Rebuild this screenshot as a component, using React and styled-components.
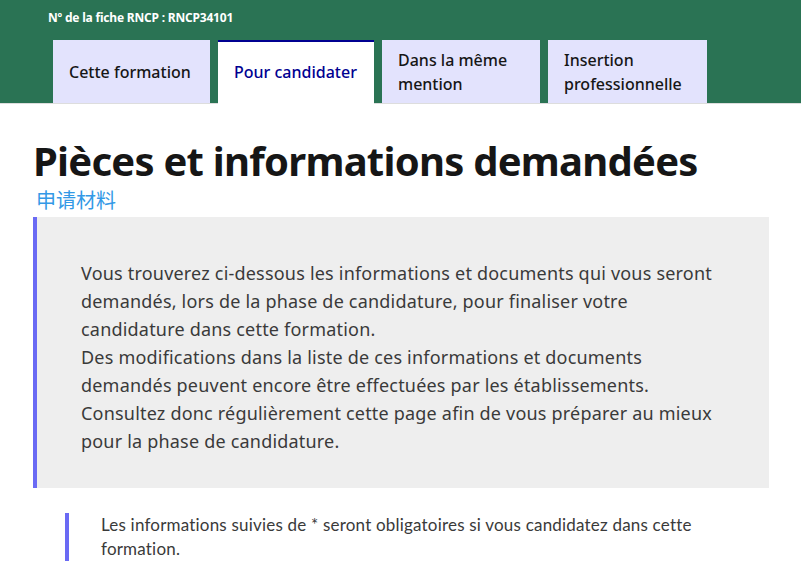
import React from "react";
import styled, { createGlobalStyle } from "styled-components";

const Global = createGlobalStyle`
  html, body { margin: 0; padding: 0; background: #fff; }
  body { font-family: "Noto Sans", "Noto Sans CJK SC", sans-serif; color: #161616; }
`;

const Header = styled.header`
  background: #2a7354;
  padding: 8px 0 0 48px;
  box-shadow: inset 0 -1px 0 #dddddd;
`;

const FicheLabel = styled.div`
  color: #fff;
  font-size: 12px;
  font-weight: 700;
  line-height: 20px;
  letter-spacing: -0.2px;
`;

const TabList = styled.nav`
  display: flex;
  gap: 8px;
  margin-top: 12px;
  padding-left: 5px;
`;

const Tab = styled.div`
  flex: none;
  box-sizing: border-box;
  width: ${(p) => p.$w}px;
  height: 64px;
  padding: 6px 16px 8px 16px;
  display: flex;
  align-items: center;
  font-size: 16px;
  font-weight: 500;
  line-height: 24px;
  background: ${(p) => (p.$active ? "#ffffff" : "#e3e3fd")};
  color: ${(p) => (p.$active ? "#000091" : "#161616")};
  border-top: 2px solid ${(p) => (p.$active ? "#000091" : "transparent")};
  box-shadow: ${(p) => (p.$active ? "none" : "inset 0 -1px 0 #dddddd")};
`;

const Main = styled.main`
  padding: 0 32px 40px 33px;
`;

const Title = styled.h1`
  margin: 35px 0 0 0;
  font-size: 40px;
  line-height: 44px;
  font-weight: 700;
  color: #161616;
  letter-spacing: -0.75px;
`;

const Subtitle = styled.div`
  margin: 6px 0 0 3px;
  font-family: "Noto Sans CJK SC", sans-serif;
  font-size: 20px;
  line-height: 22px;
  color: #3399e6;
`;

const Callout = styled.section`
  margin-top: 6px;
  background: #eeeeee;
  border-left: 4px solid #6a6af4;
  padding: 42px 44px 33px 44px;
`;

const CalloutText = styled.p`
  margin: 0;
  font-size: 18px;
  line-height: 28px;
  letter-spacing: 0.2px;
  color: #3a3a3a;
`;

const Note = styled.div`
  margin: 25px 0 0 32px;
  border-left: 4px solid #6a6af4;
  padding-left: 32px;
  font-family: Lato, sans-serif;
  font-size: 17px;
  line-height: 24px;
  letter-spacing: 0.2px;
  color: #3a3a3a;
  max-width: 610px;
`;

export default function App() {
  return (
    <>
      <Global />
      <Header>
        <FicheLabel>Nº de la fiche RNCP : RNCP34101</FicheLabel>
        <TabList>
          <Tab $w={157}>Cette formation</Tab>
          <Tab $w={156} $active>Pour candidater</Tab>
          <Tab $w={158}>Dans la même mention</Tab>
          <Tab $w={159}>Insertion professionnelle</Tab>
        </TabList>
      </Header>
      <Main>
        <Title>Pièces et informations demandées</Title>
        <Subtitle>申请材料</Subtitle>
        <Callout>
          <CalloutText>
            Vous trouverez ci-dessous les informations et documents qui vous seront demandés, lors de la phase de candidature, pour finaliser votre candidature dans cette formation.
            <br />
            Des modifications dans la liste de ces informations et documents demandés peuvent encore être effectuées par les établissements. Consultez donc régulièrement cette page afin de vous préparer au mieux pour la phase de candidature.
          </CalloutText>
        </Callout>
        <Note>
          Les informations suivies de * seront obligatoires si vous candidatez dans cette formation.
        </Note>
      </Main>
    </>
  );
}
